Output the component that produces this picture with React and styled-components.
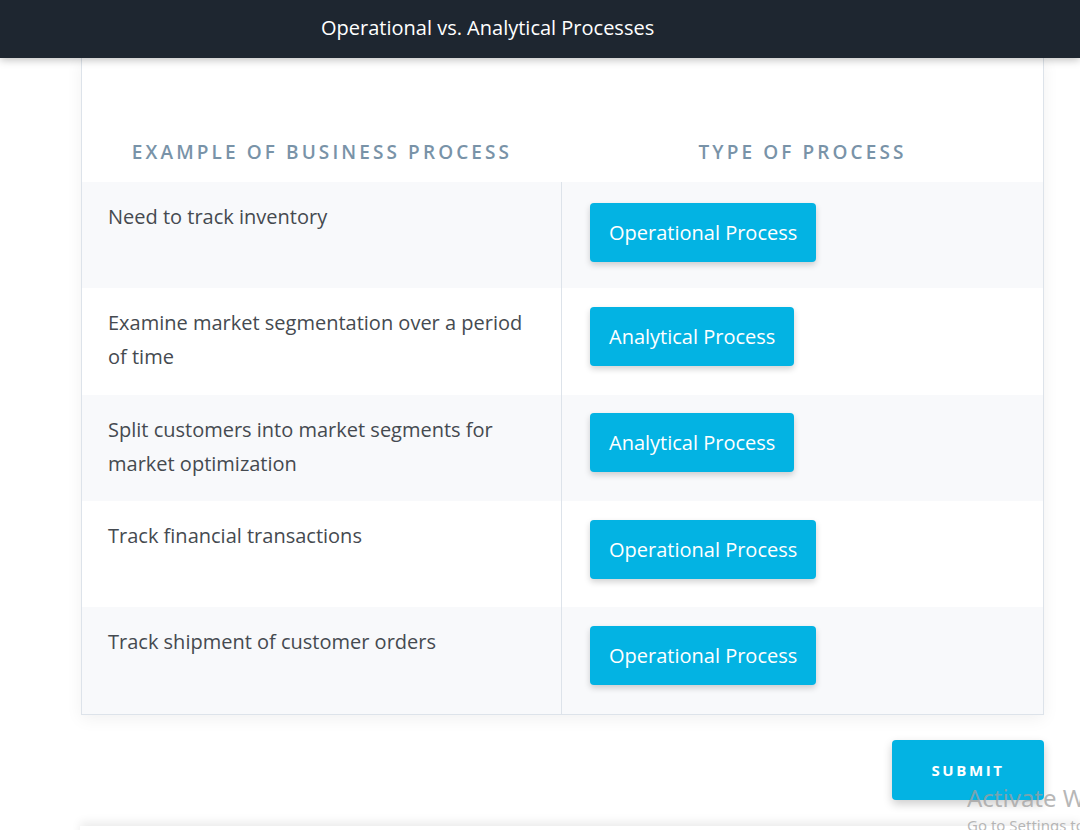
import React from "react";
import styled, { createGlobalStyle } from "styled-components";

const Global = createGlobalStyle`
  html, body { margin: 0; padding: 0; background: #ffffff; }
  body { font-family: "Open Sans", "Noto Sans", sans-serif; overflow: hidden; }
  * { box-sizing: border-box; }
`;

const Page = styled.div`
  position: relative;
  width: 1080px;
  height: 830px;
  overflow: hidden;
  background: #fff;
`;

const TopBar = styled.header`
  position: relative;
  z-index: 2;
  height: 58px;
  background: #1e2630;
  display: flex;
  align-items: center;
  padding: 0 0 4px 321px;
  box-shadow: 0 2px 8px rgba(0, 0, 0, 0.25);
`;

const Title = styled.h1`
  margin: 0;
  color: #ffffff;
  font-size: 20px;
  font-weight: 400;
`;

const Main = styled.main`
  display: flex;
  flex-direction: column;
  align-items: flex-end;
  padding: 0 36px 0 81px;
`;

const Card = styled.section`
  width: 963px;
  border: 1px solid #dde3ea;
  border-top: none;
  background: #fff;
  box-shadow: 0 4px 16px rgba(0, 0, 0, 0.06);
`;

const HeadRow = styled.div`
  display: grid;
  grid-template-columns: 480px 1fr;
  padding-top: 82px;
  height: 124px;
`;

const HeadCell = styled.div`
  text-align: center;
  color: #7993a8;
  font-size: 19px;
  font-weight: 600;
  letter-spacing: 3.1px;
  text-transform: uppercase;
  line-height: 24px;
`;

const Row = styled.div`
  display: grid;
  grid-template-columns: 480px 1fr;
  height: ${(p) => p.$h}px;
  background: ${(p) => (p.$shade ? "#f8f9fb" : "#ffffff")};
`;

const TextCell = styled.div`
  padding: 18px 30px 0 26px;
  border-right: 1px solid #dde3ea;
  color: #454a50;
  font-size: 20px;
  line-height: 34px;
`;

const ChoiceCell = styled.div`
  padding: ${(p) => p.$top}px 0 0 28px;
`;

const Choice = styled.button`
  height: 59px;
  padding: 0 19px;
  border: none;
  border-radius: 4px;
  background: #03b3e3;
  color: #ffffff;
  font-family: "Open Sans", sans-serif;
  font-size: 20px;
  box-shadow: 0 3px 6px rgba(0, 0, 0, 0.18);
  cursor: pointer;
`;

const Submit = styled.button`
  margin-top: 25px;
  width: 152px;
  height: 60px;
  border: none;
  border-radius: 4px;
  background: #03b3e3;
  color: #ffffff;
  font-family: "Open Sans", sans-serif;
  font-size: 15px;
  font-weight: 700;
  letter-spacing: 2.6px;
  box-shadow: 0 4px 10px rgba(0, 0, 0, 0.2);
  cursor: pointer;
`;

const NextCard = styled.div`
  position: absolute;
  left: 80px;
  right: 0;
  top: 826px;
  height: 20px;
  background: #fff;
  box-shadow: 0 -4px 10px rgba(0, 0, 0, 0.08);
`;

const Watermark = styled.div`
  position: absolute;
  left: 967px;
  top: 783px;
  color: rgba(160, 160, 160, 0.75);
  font-family: "Noto Sans", "Open Sans", sans-serif;
  white-space: nowrap;
  pointer-events: none;
`;

const WmBig = styled.div`
  font-size: 24px;
  line-height: 30px;
`;

const WmSmall = styled.div`
  font-size: 15px;
  line-height: 24px;
`;

const rows = [
  { text: "Need to track inventory", type: "Operational Process", h: 106, top: 21 },
  { text: "Examine market segmentation over a period of time", type: "Analytical Process", h: 107, top: 19 },
  { text: "Split customers into market segments for market optimization", type: "Analytical Process", h: 106, top: 18 },
  { text: "Track financial transactions", type: "Operational Process", h: 106, top: 19 },
  { text: "Track shipment of customer orders", type: "Operational Process", h: 107, top: 19 },
];

export default function App() {
  return (
    <Page>
      <Global />
      <TopBar>
        <Title>Operational vs. Analytical Processes</Title>
      </TopBar>
      <Main>
        <Card>
          <HeadRow>
            <HeadCell>Example of Business Process</HeadCell>
            <HeadCell>Type of Process</HeadCell>
          </HeadRow>
          {rows.map((r, i) => (
            <Row key={i} $shade={i % 2 === 0} $h={r.h}>
              <TextCell>{r.text}</TextCell>
              <ChoiceCell $top={r.top}>
                <Choice>{r.type}</Choice>
              </ChoiceCell>
            </Row>
          ))}
        </Card>
        <Submit>SUBMIT</Submit>
      </Main>
      <NextCard />
      <Watermark>
        <WmBig>Activate Windows</WmBig>
        <WmSmall>Go to Settings to activate Windows.</WmSmall>
      </Watermark>
    </Page>
  );
}
